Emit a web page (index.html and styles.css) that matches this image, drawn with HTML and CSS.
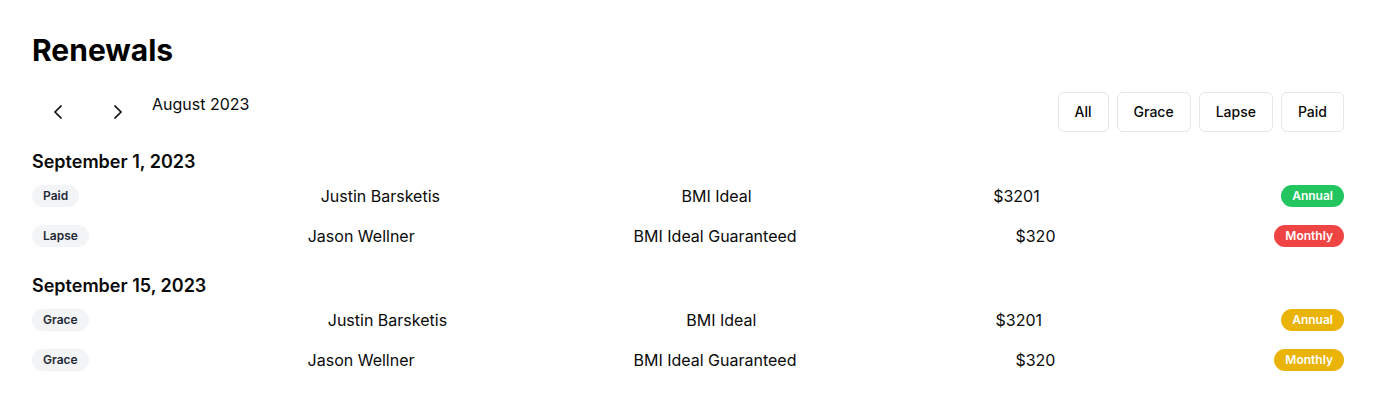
FILE: index.html
```html
<!DOCTYPE html>
<html>
<head>
<meta charset="utf-8">
<link rel="stylesheet" href="styles.css">
</head>
<body>
<div class="page">
  <h1 class="title">Renewals</h1>
  <div class="toolbar">
    <div class="nav">
      <button class="nav-btn" aria-label="Previous">
        <svg width="24" height="24" viewBox="0 0 24 24" fill="none" stroke="currentColor" stroke-width="1.75" stroke-linecap="round" stroke-linejoin="round"><path d="m15 18-6-6 6-6"/></svg>
      </button>
      <button class="nav-btn" aria-label="Next">
        <svg width="24" height="24" viewBox="0 0 24 24" fill="none" stroke="currentColor" stroke-width="1.75" stroke-linecap="round" stroke-linejoin="round"><path d="m9 18 6-6-6-6"/></svg>
      </button>
      <span class="month">August 2023</span>
    </div>
    <div class="filters">
      <button class="filter">All</button>
      <button class="filter">Grace</button>
      <button class="filter">Lapse</button>
      <button class="filter">Paid</button>
    </div>
  </div>

  <section class="group">
    <h2 class="date">September 1, 2023</h2>
    <div class="row">
      <span class="status">Paid</span>
      <span>Justin Barsketis</span>
      <span>BMI Ideal</span>
      <span>$3201</span>
      <span class="freq green">Annual</span>
    </div>
    <div class="row">
      <span class="status">Lapse</span>
      <span>Jason Wellner</span>
      <span>BMI Ideal Guaranteed</span>
      <span>$320</span>
      <span class="freq red">Monthly</span>
    </div>
  </section>

  <section class="group">
    <h2 class="date">September 15, 2023</h2>
    <div class="row">
      <span class="status">Grace</span>
      <span>Justin Barsketis</span>
      <span>BMI Ideal</span>
      <span>$3201</span>
      <span class="freq yellow">Annual</span>
    </div>
    <div class="row">
      <span class="status">Grace</span>
      <span>Jason Wellner</span>
      <span>BMI Ideal Guaranteed</span>
      <span>$320</span>
      <span class="freq yellow">Monthly</span>
    </div>
  </section>
</div>
</body>
</html>
```

FILE: styles.css
```css
* { box-sizing: border-box; }
html, body { margin: 0; padding: 0; background: #fff; }
body {
  font-family: Inter, "Liberation Sans", sans-serif;
  color: #0a0a0a;
}
.page {
  padding: 32px;
}
.title {
  margin: 0;
  font-size: 30px;
  line-height: 36px;
  font-weight: 700;
  color: #000;
}
.toolbar {
  margin-top: 24px;
  display: flex;
  justify-content: space-between;
  align-items: flex-start;
}
.nav {
  display: flex;
  align-items: flex-start;
  gap: 8px;
}
.nav-btn {
  width: 52px;
  height: 40px;
  border: none;
  background: transparent;
  border-radius: 6px;
  display: flex;
  align-items: center;
  justify-content: center;
  color: #0a0a0a;
  padding: 0;
  cursor: pointer;
}
.month {
  font-size: 16px;
  line-height: 24px;
  color: #0a0a0a;
}
.filters {
  display: flex;
  gap: 8px;
}
.filter {
  height: 40px;
  padding: 0 16px;
  border: 1px solid #e5e7eb;
  border-radius: 6px;
  background: #fff;
  font-family: inherit;
  font-size: 14px;
  line-height: 20px;
  font-weight: 500;
  color: #0a0a0a;
  padding-bottom: 1px;
}
.group {
  margin-top: 16px;
}
.date {
  margin: 0;
  font-size: 18px;
  line-height: 28px;
  font-weight: 600;
  color: #0a0a0a;
}
.row {
  height: 40px;
  display: flex;
  align-items: center;
  justify-content: space-between;
  font-size: 16px;
  line-height: 24px;
  color: #0a0a0a;
}
.status, .freq {
  display: inline-flex;
  align-items: center;
  border-radius: 9999px;
  border: 1px solid transparent;
  padding: 2px 10px;
  font-size: 12px;
  line-height: 16px;
  font-weight: 600;
}
.status {
  background: #f3f4f6;
  color: #1f2937;
}
.freq { color: #fff; }
.green { background: #22c55e; }
.red { background: #ef4444; }
.yellow { background: #eab308; }
```
